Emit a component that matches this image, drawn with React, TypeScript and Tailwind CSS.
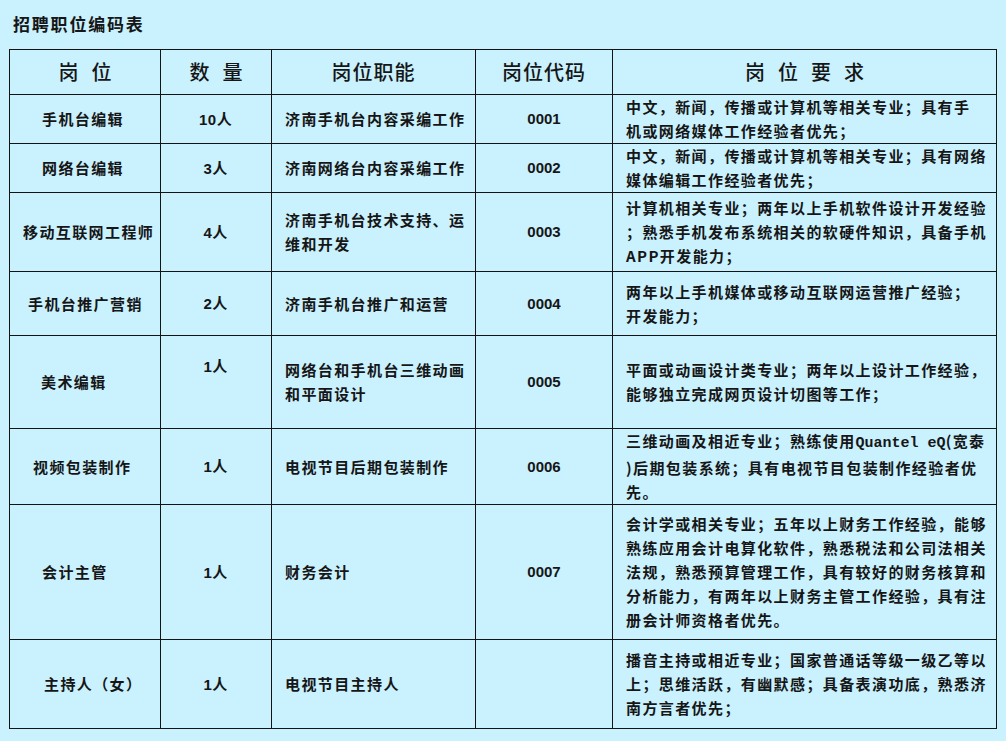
const CJK = "font-['Noto_Sans_CJK_SC','Liberation_Sans',sans-serif]";

interface Job {
  title: string;
  titlePad: string;
  qty: string;
  qtyClass?: string;
  duty: string[];
  code: string;
  req: React.ReactNode[];
  h: string;
}

const jobs: Job[] = [
  {
    title: "手机台编辑",
    titlePad: "pl-[32px]",
    qty: "10人",
    duty: ["济南手机台内容采编工作"],
    code: "0001",
    req: ["中文，新闻，传播或计算机等相关专业；具有手", "机或网络媒体工作经验者优先；"],
    h: "h-[47px]",
  },
  {
    title: "网络台编辑",
    titlePad: "pl-[32px]",
    qty: "3人",
    duty: ["济南网络台内容采编工作"],
    code: "0002",
    req: ["中文，新闻，传播或计算机等相关专业；具有网络", "媒体编辑工作经验者优先；"],
    h: "h-[47px]",
  },
  {
    title: "移动互联网工程师",
    titlePad: "pl-[13px]",
    qty: "4人",
    duty: ["济南手机台技术支持、运", "维和开发"],
    code: "0003",
    req: [
      "计算机相关专业；两年以上手机软件设计开发经验",
      "；熟悉手机发布系统相关的软硬件知识，具备手机",
      "APP开发能力；",
    ],
    h: "h-[79px]",
  },
  {
    title: "手机台推广营销",
    titlePad: "pl-[18px]",
    qty: "2人",
    duty: ["济南手机台推广和运营"],
    code: "0004",
    req: ["两年以上手机媒体或移动互联网运营推广经验；", "开发能力；"],
    h: "h-[64px]",
  },
  {
    title: "美术编辑",
    titlePad: "pl-[31px]",
    qty: "1人",
    qtyClass: "pb-[32px]",
    duty: ["网络台和手机台三维动画", "和平面设计"],
    code: "0005",
    req: ["平面或动画设计类专业；两年以上设计工作经验，", "能够独立完成网页设计切图等工作；"],
    h: "h-[93px]",
  },
  {
    title: "视频包装制作",
    titlePad: "pl-[23px]",
    qty: "1人",
    duty: ["电视节目后期包装制作"],
    code: "0006",
    req: [
      <>
        三维动画及相近专业；熟练使用
        <span className="font-['Liberation_Mono',monospace] tracking-normal">Quantel eQ</span>(宽泰
      </>,
      ")后期包装系统；具有电视节目包装制作经验者优",
      "先。",
    ],
    h: "h-[73px]",
  },
  {
    title: "会计主管",
    titlePad: "pl-[32px]",
    qty: "1人",
    duty: ["财务会计"],
    code: "0007",
    req: [
      "会计学或相关专业；五年以上财务工作经验，能够",
      "熟练应用会计电算化软件，熟悉税法和公司法相关",
      "法规，熟悉预算管理工作，具有较好的财务核算和",
      "分析能力，有两年以上财务主管工作经验，具有注",
      "册会计师资格者优先。",
    ],
    h: "h-[135px]",
  },
  {
    title: "主持人（女）",
    titlePad: "pl-[34px]",
    qty: "1人",
    duty: ["电视节目主持人"],
    code: "",
    req: [
      "播音主持或相近专业；国家普通话等级一级乙等以",
      "上；思维活跃，有幽默感；具备表演功底，熟悉济",
      "南方言者优先；",
    ],
    h: "h-[89px]",
  },
];

const Spaced = ({ text }: { text: string }) => (
  <div className="flex justify-center gap-[13px]">
    {text.split("").map((c, i) => (
      <span key={i}>{c}</span>
    ))}
  </div>
);

export default function App() {
  const cell = "border border-[#141414] p-0 align-middle";
  return (
    <div className={`w-[1006px] h-[741px] bg-[#c9f1fe] text-[#161616] ${CJK} overflow-hidden`}>
      <div className="pl-[13px] pt-[10px] h-[49px] text-[17px] font-bold tracking-[1.8px] leading-[28px]">
        招聘职位编码表
      </div>
      <table className="ml-[9px] w-[987px] table-fixed border-collapse">
        <colgroup>
          <col className="w-[151px]" />
          <col className="w-[111px]" />
          <col className="w-[204px]" />
          <col className="w-[137px]" />
          <col className="w-[384px]" />
        </colgroup>
        <thead>
          <tr className="h-[45px] text-[20px] font-medium">
            <th className={`${cell} font-medium`}>
              <Spaced text="岗位" />
            </th>
            <th className={`${cell} font-medium`}>
              <Spaced text="数量" />
            </th>
            <th className={`${cell} font-medium tracking-[1px]`}>岗位职能</th>
            <th className={`${cell} font-medium tracking-[1px]`}>岗位代码</th>
            <th className={`${cell} font-medium`}>
              <Spaced text="岗位要求" />
            </th>
          </tr>
        </thead>
        <tbody className="text-[15px] font-bold leading-[24px] tracking-[1.4px]">
          {jobs.map((j) => (
            <tr key={j.title} className={j.h}>
              <td className={`${cell} ${j.titlePad} whitespace-nowrap`}>{j.title}</td>
              <td className={`${cell} text-center ${j.qtyClass ?? ""}`}>
                <span className="font-['Liberation_Sans',sans-serif] text-[15px] tracking-[0.5px]">
                  {j.qty.replace("人", "")}
                </span>
                人
              </td>
              <td className={`${cell} pl-[13px] whitespace-nowrap`}>
                {j.duty.map((d, i) => (
                  <div key={i}>{d}</div>
                ))}
              </td>
              <td className={`${cell} text-center font-['Liberation_Sans',sans-serif] text-[15px] tracking-normal`}>
                {j.code}
              </td>
              <td className={`${cell} pl-[13px] whitespace-nowrap`}>
                {j.req.map((r, i) => (
                  <div key={i}>{r}</div>
                ))}
              </td>
            </tr>
          ))}
        </tbody>
      </table>
    </div>
  );
}
